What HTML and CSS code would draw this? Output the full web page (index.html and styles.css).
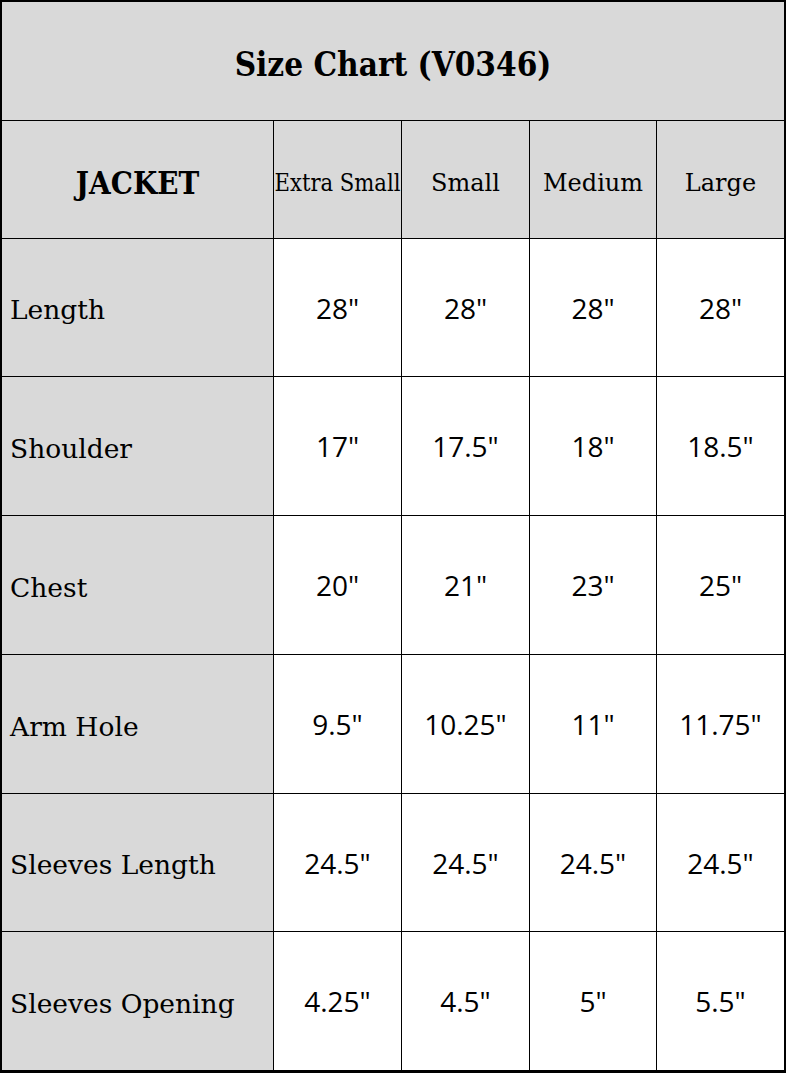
FILE: index.html
```html
<!DOCTYPE html>
<html>
<head>
<meta charset="utf-8">
<link rel="stylesheet" href="styles.css">
</head>
<body>
<div class="chart">
  <div class="title">Size Chart (V0346)</div>
  <div class="head head-main">JACKET</div>
  <div class="head head-tight">Extra Small</div>
  <div class="head">Small</div>
  <div class="head">Medium</div>
  <div class="head">Large</div>

  <div class="label">Length</div>
  <div class="val">28"</div><div class="val">28"</div><div class="val">28"</div><div class="val">28"</div>

  <div class="label">Shoulder</div>
  <div class="val">17"</div><div class="val">17.5"</div><div class="val">18"</div><div class="val">18.5"</div>

  <div class="label">Chest</div>
  <div class="val">20"</div><div class="val">21"</div><div class="val">23"</div><div class="val">25"</div>

  <div class="label">Arm Hole</div>
  <div class="val">9.5"</div><div class="val">10.25"</div><div class="val">11"</div><div class="val">11.75"</div>

  <div class="label">Sleeves Length</div>
  <div class="val">24.5"</div><div class="val">24.5"</div><div class="val">24.5"</div><div class="val">24.5"</div>

  <div class="label">Sleeves Opening</div>
  <div class="val">4.25"</div><div class="val">4.5"</div><div class="val">5"</div><div class="val">5.5"</div>
</div>
</body>
</html>
```

FILE: styles.css
```css
html, body {
  margin: 0;
  padding: 0;
  background: #ffffff;
}

.chart {
  width: 782px;
  border: 2px solid #000;
  border-bottom-width: 3px;
  background: #000;
  display: grid;
  grid-template-columns: 271px 127px 127px 126px 127px;
  grid-template-rows: 118px 117px 137px 138px 138px 138px 137px 138px;
  gap: 1px;
  font-family: "DejaVu Serif", "Liberation Serif", serif;
  color: #000;
}

.title {
  grid-column: 1 / -1;
  background: #d9d9d9;
  display: flex;
  align-items: center;
  justify-content: center;
  font-family: "DejaVu Serif Condensed", "DejaVu Serif", serif;
  font-weight: bold;
  font-size: 33px;
  padding-top: 6px;
}

.head {
  background: #d9d9d9;
  display: flex;
  align-items: center;
  justify-content: center;
  font-size: 24px;
  white-space: nowrap;
  overflow: hidden;
  padding-top: 6px;
}

.head-tight {
  font-family: "DejaVu Serif Condensed", "DejaVu Serif", serif;
  font-size: 23.5px;
}

.head-main {
  font-family: "DejaVu Serif Condensed", "DejaVu Serif", serif;
  font-weight: bold;
  font-size: 31px;
}

.label {
  background: #d9d9d9;
  display: flex;
  align-items: center;
  padding-left: 8px;
  padding-top: 4px;
  font-size: 26.5px;
}

.val {
  background: #fff;
  display: flex;
  align-items: center;
  justify-content: center;
  font-family: "Open Sans", "Liberation Sans", sans-serif;
  font-size: 28px;
}
```
